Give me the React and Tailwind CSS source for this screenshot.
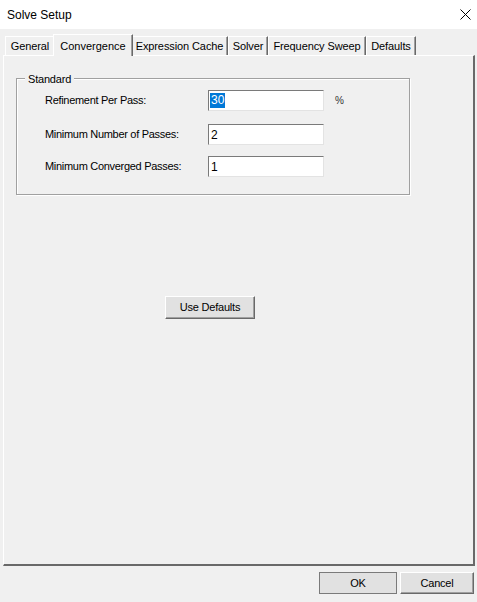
import React from 'react';

const tabs = [
  { label: 'General', w: 'w-[50px]' },
  { label: 'Convergence', w: 'w-[80px]', active: true },
  { label: 'Expression Cache', w: 'w-[97px]' },
  { label: 'Solver', w: 'w-[40px]' },
  { label: 'Frequency Sweep', w: 'w-[98px]' },
  { label: 'Defaults', w: 'w-[50px]' },
];

const fields = [
  { label: 'Refinement Per Pass:', value: '30', selected: true, unit: '%', mt: 'mt-[11px]' },
  { label: 'Minimum Number of Passes:', value: '2', mt: 'mt-[13px]' },
  { label: 'Minimum Converged Passes:', value: '1', mt: 'mt-[11px]' },
];

function WinButton({ children, className, isDefault }) {
  return (
    <button
      className={`flex items-center justify-center bg-[#e1e1e1] text-[11px] tracking-[-0.2px] text-black border ${
        isDefault ? 'border-[#7a7a7a]' : 'border-t-white border-l-white border-r-[#696969] border-b-[#696969] shadow-[inset_-1px_-1px_0_#a0a0a0]'
      } ${className}`}
    >
      {children}
    </button>
  );
}

export default function App() {
  return (
    <div className="w-[477px] h-[602px] bg-[#f0f0f0] flex flex-col overflow-hidden font-['Liberation_Sans',Arial,sans-serif] text-[11px] text-black">
      {/* title bar */}
      <header className="h-[29px] bg-white flex items-center justify-between pl-[7px] pr-[6px] shrink-0">
        <span className="text-[12px]">Solve Setup</span>
        <svg width="11" height="11" viewBox="0 0 11 11">
          <path d="M0.5 0.5 L10.5 10.5 M10.5 0.5 L0.5 10.5" stroke="#000" strokeWidth="1" />
        </svg>
      </header>

      <div className="flex flex-col pl-[3px] pr-[2px]">
        {/* tabs */}
        <div className="h-[27px] flex items-end pl-[2px] relative z-10 -mb-[1px]">
          {tabs.map((t) =>
            t.active ? (
              <div
                key={t.label}
                className={`${t.w} h-[22px] -mx-[2px] relative z-10 bg-[#f0f0f0] border-t border-l border-t-white border-l-white border-r border-r-[#696969] shadow-[inset_-1px_0_0_#a0a0a0] flex justify-center pt-[3px]`}
              >
                {t.label}
              </div>
            ) : (
              <div
                key={t.label}
                className={`${t.w} h-[19px] mb-[1px] border-t border-l border-t-white border-l-white border-r border-r-[#696969] shadow-[inset_-1px_0_0_#a0a0a0] flex items-center justify-center tracking-[-0.1px]`}
              >
                {t.label}
              </div>
            )
          )}
        </div>

        {/* panel */}
        <div className="h-[511px] border-t border-l border-t-white border-l-white border-r-2 border-b-2 border-r-[#696969] border-b-[#696969] flex flex-col">
          <div className="relative ml-[12px] mt-[22px] w-[394px] h-[117px] border border-[#a0a0a0] shadow-[1px_1px_0_white,inset_1px_1px_0_white] pl-[28px]">
            <span className="absolute -top-[8px] left-[8px] px-[3px] bg-[#f0f0f0] tracking-[-0.2px]">Standard</span>
            {fields.map((f) => (
              <div key={f.label} className={`flex items-center h-[21px] ${f.mt}`}>
                <span className="w-[163px] tracking-[-0.3px]">{f.label}</span>
                <div className="w-[116px] h-[21px] bg-white border border-t-[#7a7a7a] border-l-[#7a7a7a] border-r-[#e3e3e3] border-b-[#e3e3e3] flex items-center pl-[1px]">
                  {f.selected ? (
                    <span className="bg-[#0078d7] text-white text-[12px] leading-[15px] px-[1px]">{f.value}</span>
                  ) : (
                    <span className="text-[12px] px-[1px]">{f.value}</span>
                  )}
                </div>
                {f.unit && <span className="ml-[11px] text-[10px] text-[#333]">{f.unit}</span>}
              </div>
            ))}
          </div>

          <WinButton className="ml-[161px] mt-[101px] w-[90px] h-[23px]">Use Defaults</WinButton>
        </div>
      </div>

      {/* footer buttons */}
      <div className="flex justify-end gap-[3px] pt-[6px] pr-[3px]">
        <WinButton isDefault className="w-[78px] h-[22px]">OK</WinButton>
        <WinButton className="w-[74px] h-[22px]">Cancel</WinButton>
      </div>
    </div>
  );
}
